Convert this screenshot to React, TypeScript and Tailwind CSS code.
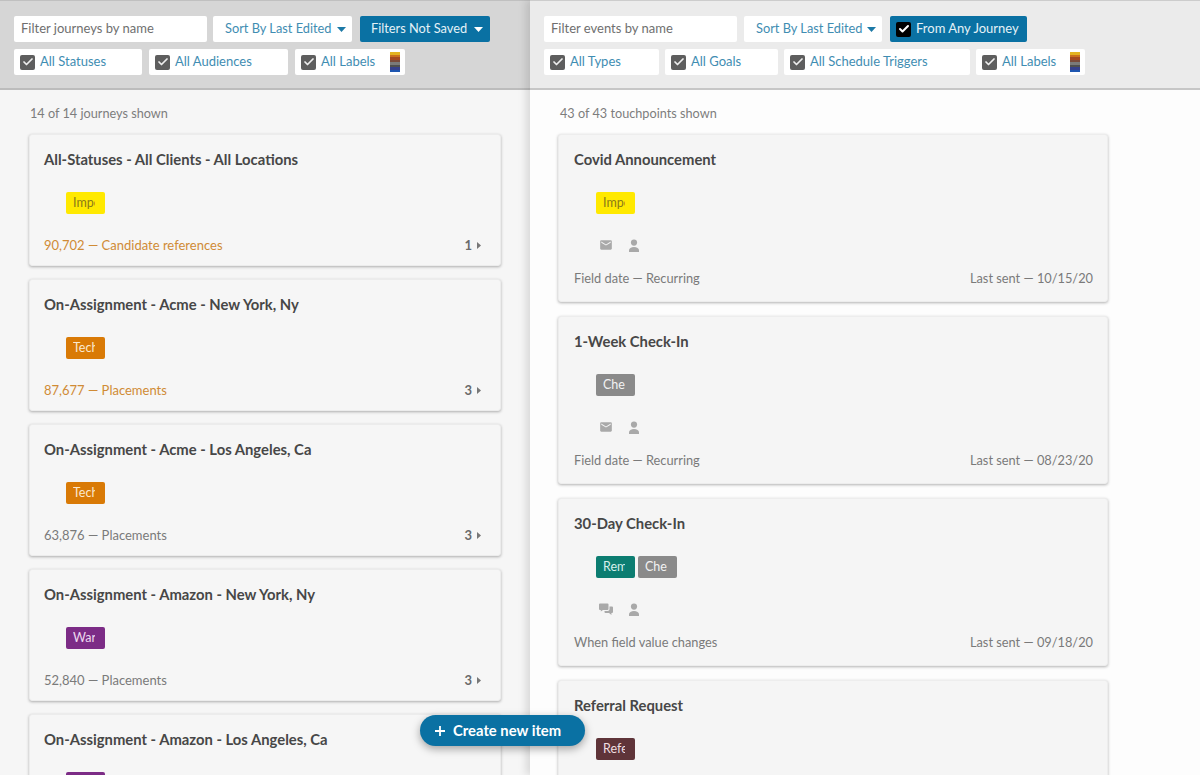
import { Check } from 'lucide-react';
import { MdEmail } from 'react-icons/md';

interface Journey {
    title: string;
    tag: string;
    tagClass: string;
    count: string;
    warn?: boolean;
    steps: number;
}

interface Touchpoint {
    title: string;
    tags: { label: string; className: string }[];
    chat?: boolean;
    trigger: string;
    lastSent: string;
}

const YELLOW = 'bg-[#ffe900] text-[#8a7a1a]';
const ORANGE = 'bg-[#d97a06] text-[#fbe9d0]';
const PURPLE = 'bg-[#7c2c86] text-[#ecd9ee]';
const TEAL = 'bg-[#0c7d71] text-[#d6efec]';
const GRAY = 'bg-[#8a8a8a] text-[#f2f2f2]';
const MAROON = 'bg-[#5f3439] text-[#f0dfe0]';

const JOURNEYS: Journey[] = [
    { title: 'All-Statuses - All Clients - All Locations', tag: 'Important', tagClass: YELLOW, count: '90,702 — Candidate references', warn: true, steps: 1 },
    { title: 'On-Assignment - Acme - New York, Ny', tag: 'Technical', tagClass: ORANGE, count: '87,677 — Placements', warn: true, steps: 3 },
    { title: 'On-Assignment - Acme - Los Angeles, Ca', tag: 'Technical', tagClass: ORANGE, count: '63,876 — Placements', steps: 3 },
    { title: 'On-Assignment - Amazon - New York, Ny', tag: 'Warehouse', tagClass: PURPLE, count: '52,840 — Placements', steps: 3 },
    { title: 'On-Assignment - Amazon - Los Angeles, Ca', tag: 'Warehouse', tagClass: PURPLE, count: '48,120 — Placements', steps: 3 },
];

const TOUCHPOINTS: Touchpoint[] = [
    { title: 'Covid Announcement', tags: [{ label: 'Important', className: YELLOW }], trigger: 'Field date — Recurring', lastSent: 'Last sent — 10/15/20' },
    { title: '1-Week Check-In', tags: [{ label: 'Check-In', className: GRAY }], trigger: 'Field date — Recurring', lastSent: 'Last sent — 08/23/20' },
    { title: '30-Day Check-In', tags: [{ label: 'Reminder', className: TEAL }, { label: 'Check-In', className: GRAY }], chat: true, trigger: 'When field value changes', lastSent: 'Last sent — 09/18/20' },
    { title: 'Referral Request', tags: [{ label: 'Referral', className: MAROON }], trigger: 'Field date — Recurring', lastSent: 'Last sent — 09/02/20' },
];

function Caret({ className }: { className: string }) {
    return (
        <svg width="9" height="5" viewBox="0 0 9 5" className={className}>
            <path d="M0 0h9L4.5 5z" fill="currentColor" />
        </svg>
    );
}

function ChatIcon() {
    return (
        <svg width="14" height="14" viewBox="0 0 14 14" fill="currentColor">
            <path d="M1 1.5h7.5a1 1 0 0 1 1 1V7a1 1 0 0 1-1 1H4L1.8 9.6V8H1a1 1 0 0 1-1-1V2.500a1 1 0 0 1 1-1z" />
            <path d="M10.500 4.500H13a1 1 0 0 1 1 1V10a1 1 0 0 1-1 1h-.6v2L10 11H6.500a1 1 0 0 1-1-1V9h3.200a1.800 1.800 0 0 0 1.800-1.800z" />
        </svg>
    );
}

function PersonIcon() {
    return (
        <svg width="12" height="13" viewBox="0 0 12 13" fill="currentColor">
            <circle cx="6" cy="3.600" r="3.100" />
            <path d="M1 13v-1.800C1 9.300 3.200 8 6 8s5 1.300 5 3.200V13z" />
        </svg>
    );
}

function LabelStripes() {
    const colors = ['#e3b21f', '#c9701c', '#a4481f', '#7a4a3a', '#7a7a7a', '#4f4f4f', '#35408c', '#1e56b0'];
    return (
        <span className="flex flex-col w-[10px] h-[20px] overflow-hidden">
            {colors.map(c => (
                <span key={c} className="flex-1" style={{ backgroundColor: c }} />
            ))}
        </span>
    );
}

function FilterCheck({ label, width, stripes }: { label: string; width: string; stripes?: boolean }) {
    return (
        <div className={`${width} h-[26px] bg-white rounded-[2px] flex items-center pl-[6px] pr-[5px]`}>
            <span className="w-[15px] h-[15px] rounded-[2px] bg-[#5e5e5e] flex items-center justify-center shrink-0">
                <Check size={12} strokeWidth={3.5} className="text-[#eeeeee]" />
            </span>
            <span className="ml-[5px] text-[13px] text-[#3f8db2] whitespace-nowrap">{label}</span>
            {stripes && <span className="ml-auto"><LabelStripes /></span>}
        </div>
    );
}

function SortSelect({ width }: { width: string }) {
    return (
        <div className={`${width} h-[26px] bg-white rounded-[2px] flex items-center justify-between pl-[12px] pr-[6px] text-[12.8px] text-[#3f8db2]`}>
            <span className="whitespace-nowrap">Sort By Last Edited</span>
            <Caret className="text-[#1c79a6]" />
        </div>
    );
}

function NameFilter({ placeholder, width }: { placeholder: string; width: string }) {
    return (
        <div className={`${width} h-[26px] bg-white rounded-[2px] flex items-center pl-[7px] text-[13px] text-[#6f6f6f]`}>
            {placeholder}
        </div>
    );
}

function Tag({ label, className }: { label: string; className: string }) {
    return (
        <span className={`${className} w-[39px] h-[22px] rounded-[2px] pl-[7px] flex items-center text-[12.5px]`}>
            <span className="block w-[22px] overflow-hidden whitespace-nowrap">{label}</span>
        </span>
    );
}

function JourneyCard({ journey }: { journey: Journey }) {
    return (
        <div className="h-[132px] shrink-0 bg-[#f6f6f6] rounded-[3px] border border-[#ececec] shadow-[0_1px_3px_rgba(0,0,0,0.3)] pl-[14px] pr-[19px] flex flex-col">
            <h2 className="mt-[14px] h-[20px] text-[14.8px] leading-[20px] font-bold text-[#474747] whitespace-nowrap">{journey.title}</h2>
            <div className="mt-[23px] ml-[22px] flex">
                <Tag label={journey.tag} className={journey.tagClass} />
            </div>
            <div className="mt-[22px] flex items-center justify-between text-[13px]">
                <span className={journey.warn ? 'text-[#d08b35]' : 'text-[#7a7a7a]'}>{journey.count}</span>
                <span className="flex items-center gap-[5px] font-bold text-[#6a6a6a]">
                    {journey.steps}
                    <svg width="4" height="7" viewBox="0 0 4 7">
                        <path d="M0 0l4 3.5L0 7z" fill="#777777" />
                    </svg>
                </span>
            </div>
        </div>
    );
}

function TouchpointCard({ touchpoint }: { touchpoint: Touchpoint }) {
    return (
        <div className="h-[168px] shrink-0 bg-[#f5f5f5] rounded-[3px] border border-[#ededed] shadow-[0_1px_3px_rgba(0,0,0,0.3)] pl-[15px] pr-[14px] flex flex-col">
            <h2 className="mt-[14px] h-[20px] text-[14.8px] leading-[20px] font-bold text-[#474747] whitespace-nowrap">{touchpoint.title}</h2>
            <div className="mt-[23px] ml-[22px] flex gap-[3px]">
                {touchpoint.tags.map(tag => (
                    <Tag key={tag.label} label={tag.label} className={tag.className} />
                ))}
            </div>
            <div className="mt-[24px] ml-[25px] h-[14px] flex items-center gap-[15px] text-[#a9a9a9]">
                {touchpoint.chat ? <ChatIcon /> : <MdEmail size={14} />}
                <PersonIcon />
            </div>
            <div className="mt-[17px] flex items-center justify-between text-[12.8px] text-[#7a7a7a]">
                <span>{touchpoint.trigger}</span>
                <span>{touchpoint.lastSent}</span>
            </div>
        </div>
    );
}

export default function App() {
    return (
        <div className="relative w-[1200px] h-[775px] overflow-hidden flex font-['Lato','Liberation_Sans',sans-serif]">
            {/* Journeys */}
            <section className="w-[530px] shrink-0 bg-[#f6f6f6] flex flex-col">
                <header className="h-[90px] shrink-0 bg-[#d6d6d6] border-t border-t-[#c0c0c0] border-b-2 border-b-[#bcbcbc] pt-[15px] pl-[14px] flex flex-col gap-[7px]">
                    <div className="flex gap-[6px]">
                        <NameFilter placeholder="Filter journeys by name" width="w-[193px]" />
                        <SortSelect width="w-[139px]" />
                        <div className="ml-[2px] w-[130px] h-[26px] bg-[#0a71a3] rounded-[2px] flex items-center justify-between pl-[11px] pr-[7px] text-[12.8px] text-[#e4f1f7]">
                            <span className="whitespace-nowrap">Filters Not Saved</span>
                            <Caret className="text-white" />
                        </div>
                    </div>
                    <div className="flex gap-[7px]">
                        <FilterCheck label="All Statuses" width="w-[128px]" />
                        <FilterCheck label="All Audiences" width="w-[139px]" />
                        <FilterCheck label="All Labels" width="w-[110px]" stripes />
                    </div>
                </header>
                <p className="mt-[15px] ml-[30px] h-[16px] leading-[16px] text-[12.7px] text-[#7d7d7d]">14 of 14 journeys shown</p>
                <div className="mt-[13px] ml-[29px] w-[472px] flex flex-col gap-[13px]">
                    {JOURNEYS.map(j => (
                        <JourneyCard key={j.title} journey={j} />
                    ))}
                </div>
            </section>

            {/* Touchpoints */}
            <section className="flex-1 bg-[#fdfdfd] flex flex-col shadow-[-4px_0_8px_rgba(0,0,0,0.12)] z-10">
                <header className="h-[90px] shrink-0 bg-[#ebebeb] border-t border-t-[#cccccc] border-b-2 border-b-[#c6c6c6] pt-[15px] pl-[14px] flex flex-col gap-[7px]">
                    <div className="flex gap-[7px]">
                        <NameFilter placeholder="Filter events by name" width="w-[193px]" />
                        <SortSelect width="w-[138px]" />
                        <div className="ml-[1px] w-[137px] h-[26px] bg-[#0a71a3] rounded-[2px] flex items-center pl-[6px] text-[13px] text-[#e4f1f7]">
                            <span className="w-[15px] h-[15px] rounded-[2px] bg-black flex items-center justify-center shrink-0">
                                <Check size={12} strokeWidth={4} className="text-white" />
                            </span>
                            <span className="ml-[5px] whitespace-nowrap">From Any Journey</span>
                        </div>
                    </div>
                    <div className="flex gap-[6px]">
                        <FilterCheck label="All Types" width="w-[115px]" />
                        <FilterCheck label="All Goals" width="w-[113px]" />
                        <FilterCheck label="All Schedule Triggers" width="w-[186px]" />
                        <FilterCheck label="All Labels" width="w-[109px]" stripes />
                    </div>
                </header>
                <p className="mt-[15px] ml-[30px] h-[16px] leading-[16px] text-[12.7px] text-[#7d7d7d]">43 of 43 touchpoints shown</p>
                <div className="mt-[13px] ml-[28px] w-[550px] flex flex-col gap-[14px]">
                    {TOUCHPOINTS.map(t => (
                        <TouchpointCard key={t.title} touchpoint={t} />
                    ))}
                </div>
            </section>

            <button className="absolute z-20 left-[420px] top-[715px] w-[165px] h-[31px] rounded-full bg-[#0a71a3] text-white text-[14.8px] font-bold flex items-center pl-[15px] gap-[8px] shadow-[0_3px_8px_rgba(0,0,0,0.35)]">
                <svg width="10" height="10" viewBox="0 0 10 10">
                    <path d="M5 0v10M0 5h10" stroke="currentColor" strokeWidth="1.8" />
                </svg>
                Create new item
            </button>
        </div>
    );
}
